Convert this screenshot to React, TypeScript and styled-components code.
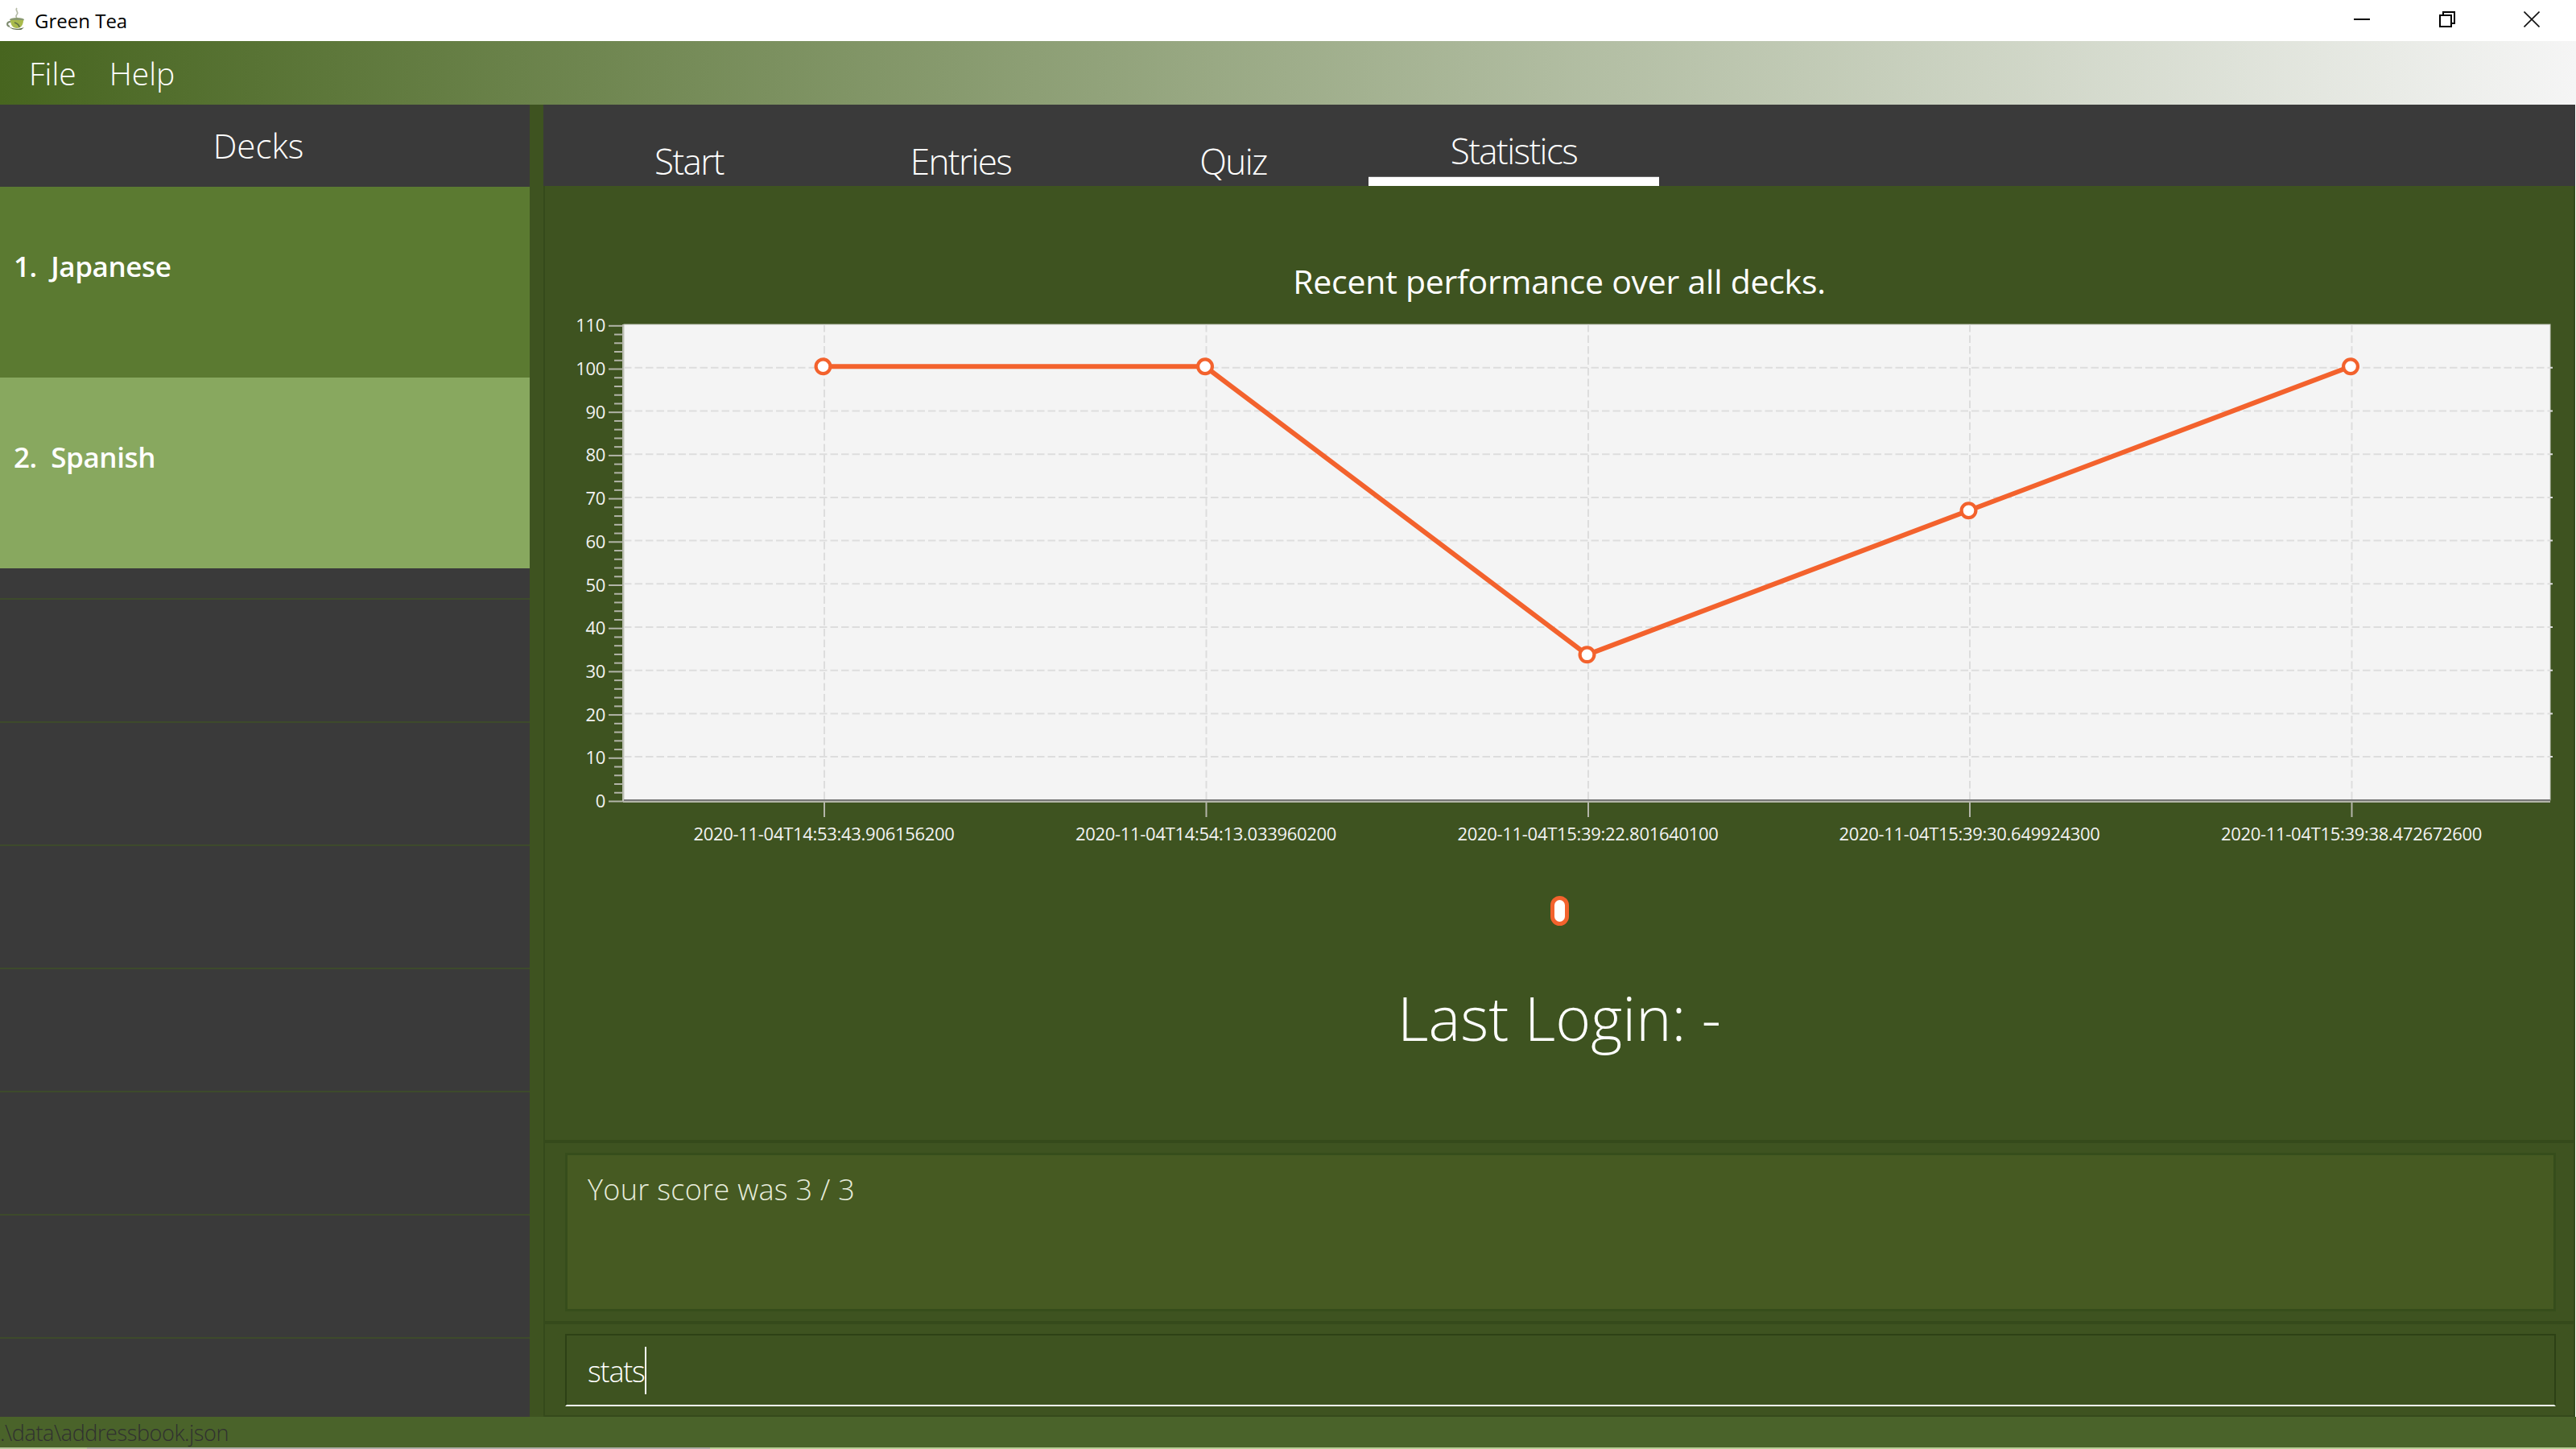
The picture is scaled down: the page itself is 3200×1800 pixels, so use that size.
import styled, { createGlobalStyle } from "styled-components";

const FONT = `"Open Sans", "Noto Sans", "Liberation Sans", sans-serif`;

const GlobalStyle = createGlobalStyle`
  html, body {
    margin: 0;
    padding: 0;
    background: #ffffff;
  }
  * {
    box-sizing: border-box;
  }
`;

// ---- window frame
const Window = styled.div`
  width: 3200px;
  height: 1800px;
  display: flex;
  flex-direction: column;
  overflow: hidden;
  font-family: ${FONT};
`;

const TitleBar = styled.div`
  height: 51px;
  flex: none;
  display: flex;
  align-items: center;
  background: #ffffff;
  padding: 0 2px 3px 8px;
`;

const AppName = styled.span`
  margin: 3px 0 0 11px;
  font-size: 24px;
  letter-spacing: 0;
  line-height: 30px;
  color: #000000;
`;

const WindowControls = styled.div`
  margin-left: auto;
  display: flex;
`;

const WindowButton = styled.div`
  width: 105.5px;
  height: 40px;
  display: flex;
  align-items: center;
  justify-content: center;
`;

const MenuBar = styled.div`
  height: 79px;
  flex: none;
  display: flex;
  align-items: center;
  gap: 41px;
  padding: 0 0 0 36px;
  background: linear-gradient(to right, #47651f, #f5f5f5);
`;

const MenuItem = styled.span`
  font-size: 39px;
  font-weight: 300;
  line-height: 50px;
  color: #ffffff;
`;

const Main = styled.div`
  height: 1630px;
  width: 3199px;
  flex: none;
  display: flex;
  background: #3e5320;
`;

// ---- deck list
const DeckPanel = styled.div`
  width: 658px;
  flex: none;
  display: flex;
  flex-direction: column;
  background: #3a3a3a;
`;

const DeckHeader = styled.div`
  height: 102px;
  flex: none;
  display: flex;
  align-items: center;
  justify-content: center;
  padding: 0 16px 2px 0;
  font-size: 42px;
  font-weight: 300;
  color: #ffffff;
`;

const DeckRow = styled.div<{ $selected?: boolean }>`
  height: 237px;
  flex: none;
  padding: 74px 0 0 17px;
  background: ${(p) => (p.$selected ? "#88a85f" : "#5b7a31")};
  font-size: 35px;
  font-weight: 600;
  line-height: 50px;
  letter-spacing: -0.4px;
  white-space: pre;
  color: #ffffff;
`;

const EmptyRow = styled.div<{ $height: number }>`
  height: ${(p) => p.$height}px;
  flex: none;
  border-bottom: 2px solid #3d4a2b;
`;

const Divider = styled.div`
  width: 17px;
  flex: none;
  background: #3e5320;
`;

// ---- right side
const RightPanel = styled.div`
  flex: 1;
  min-width: 0;
  display: flex;
  flex-direction: column;
`;

const TabBar = styled.div`
  height: 101px;
  flex: none;
  display: flex;
  align-items: flex-end;
  padding-left: 35px;
  background: #3a3a3a;
`;

const Tab = styled.div<{ $width: number; $gap: number; $active?: boolean }>`
  width: ${(p) => p.$width}px;
  margin-left: ${(p) => p.$gap}px;
  height: ${(p) => (p.$active ? 101 : 72)}px;
  flex: none;
  display: flex;
  justify-content: center;
  align-items: flex-end;
  padding-bottom: ${(p) => (p.$active ? 3 : 1)}px;
  font-size: 44px;
  font-weight: 300;
  line-height: 60px;
  letter-spacing: -1.6px;
  color: #ffffff;
  ${(p) => p.$active && "border-bottom: 11px solid #ffffff; box-shadow: inset 0 -1px 0 #666666;"}
`;

const StatsPane = styled.div`
  height: 1189px;
  flex: none;
  display: flex;
  flex-direction: column;
  align-items: center;
  border-left: 2px solid #354a1b;
  border-right: 2px solid #354a1b;
  border-bottom: 4px solid #354a1b;
  background: #3e5320;
`;

const ChartTitle = styled.div`
  margin-top: 88px;
  font-size: 41px;
  line-height: 60px;
  font-weight: 400;
  letter-spacing: -0.25px;
  color: #ffffff;
`;

const ChartSvg = styled.svg`
  display: block;
  margin-top: 2px;
  width: 2520px;
  height: 679px;
  flex: none;
`;

const AxisLabel = styled.text`
  font-family: ${FONT};
  font-size: 22px;
  letter-spacing: -0.3px;
  fill: #f2f2f2;
`;

const LegendPill = styled.div`
  margin-top: 53px;
  width: 23px;
  height: 37px;
  flex: none;
  border: 5px solid #f3622d;
  border-radius: 12px;
  background: #ffffff;
`;

const LastLogin = styled.div`
  margin-top: 64px;
  font-size: 75px;
  font-weight: 300;
  line-height: 100px;
  color: #ffffff;
`;

const ResultSection = styled.div`
  height: 225px;
  flex: none;
  padding: 12px 22px 12px 25px;
  border-left: 2px solid #354a1b;
  border-right: 2px solid #354a1b;
  border-bottom: 4px solid #354a1b;
  background: #3e5320;
`;

const ResultBox = styled.div`
  height: 197px;
  padding: 18px 25px;
  border: 3px solid #364d1b;
  background: #465a22;
  font-size: 36px;
  font-weight: 300;
  line-height: 50px;
  letter-spacing: 0.3px;
  color: #e6ecdc;
`;

const CommandSection = styled.div`
  height: 115px;
  flex: none;
  padding: 12px 22px 0 25px;
  border-left: 2px solid #354a1b;
  border-right: 2px solid #354a1b;
  border-bottom: 2px solid #354a1b;
  background: #3e5320;
`;

const CommandBox = styled.div`
  height: 90px;
  display: flex;
  align-items: flex-start;
  padding: 14px 0 0 26px;
  border: 2px solid #2d4115;
  border-bottom: 2px solid #ffffff;
  background: #3e5320;
  color: #ffffff;
`;

const CommandText = styled.span`
  padding-top: 1px;
  font-size: 36px;
  font-weight: 300;
  line-height: 60px;
  letter-spacing: -1.2px;
`;

const Caret = styled.span`
  width: 2px;
  height: 59px;
  flex: none;
  background: #ffffff;
`;

const StatusBar = styled.div`
  height: 38px;
  flex: none;
  display: flex;
  align-items: center;
  background: #4a632a;
  font-size: 27px;
  font-weight: 300;
  letter-spacing: -0.4px;
  color: #303030;
`;

const BottomEdge = styled.div`
  height: 2px;
  flex: none;
  background: linear-gradient(
    to right,
    #b7c89c 0,
    #b7c89c 108px,
    #aeaea6 108px,
    #aeaea6 882px,
    #b7cf96 882px
  );
`;

// ---- chart data, in page pixels
const PLOT = { left: 775, right: 3168, top: 403, bottom: 994 };
const seriesY = (v: number) => 992.3 - v * 5.37;
const gridY = (v: number) => 993.8 - v * 5.37;
const tickY = (v: number) => 995.5 - v * 5.37;

const points = [
  { x: 1022.5, value: 100, label: "2020-11-04T14:53:43.906156200" },
  { x: 1497, value: 100, label: "2020-11-04T14:54:13.033960200" },
  { x: 1971.5, value: 33.33, label: "2020-11-04T15:39:22.801640100" },
  { x: 2445.5, value: 66.67, label: "2020-11-04T15:39:30.649924300" },
  { x: 2920, value: 100, label: "2020-11-04T15:39:38.472672600" },
];

const majorTicks = Array.from({ length: 12 }, (_, i) => i * 10);
const minorTicks = Array.from({ length: 55 }, (_, i) => i * 2).filter((v) => v % 10 !== 0);

function PerformanceChart() {
  return (
    <ChartSvg viewBox="677 381 2520 679">
      <rect
        x={PLOT.left}
        y={PLOT.top}
        width={PLOT.right - PLOT.left}
        height={PLOT.bottom - PLOT.top}
        fill="#f4f4f4"
        stroke="#c4c8bc"
        strokeWidth="1"
      />
      {majorTicks.slice(1, 11).map((v) => (
        <line
          key={v}
          x1={PLOT.left}
          x2={PLOT.right + 3}
          y1={gridY(v)}
          y2={gridY(v)}
          stroke="#dddddd"
          strokeWidth="2"
          strokeDasharray="9.5 4"
        />
      ))}
      {points.map((p) => (
        <line
          key={p.x}
          x1={p.x + 1.5}
          x2={p.x + 1.5}
          y1={PLOT.top}
          y2={PLOT.bottom}
          stroke="#dddddd"
          strokeWidth="2"
          strokeDasharray="9.5 4"
        />
      ))}

      <line x1="774" x2="774" y1={PLOT.top} y2="996" stroke="#bcbfb4" strokeWidth="2" />
      {minorTicks.map((v) => (
        <line key={v} x1="763" x2="774" y1={tickY(v)} y2={tickY(v)} stroke="#b3b5a9" strokeWidth="2" />
      ))}
      {majorTicks.map((v) => (
        <g key={v}>
          <line x1="756" x2="774" y1={tickY(v)} y2={tickY(v)} stroke="#b3b5a9" strokeWidth="2" />
          <AxisLabel x="752" y={tickY(v) + 7.5} textAnchor="end">
            {v}
          </AxisLabel>
        </g>
      ))}

      <rect x={PLOT.left} y="993" width={PLOT.right - PLOT.left} height="2" fill="#767676" />
      <rect x={PLOT.left - 1} y="995" width={PLOT.right - PLOT.left + 1} height="2" fill="#b3b5a9" />
      {points.map((p) => (
        <g key={p.label}>
          <line x1={p.x + 1.5} x2={p.x + 1.5} y1="997" y2="1015" stroke="#b3b5a9" strokeWidth="2" />
          <AxisLabel x={p.x + 1} y="1044" textAnchor="middle">
            {p.label}
          </AxisLabel>
        </g>
      ))}

      <polyline
        points={points.map((p) => `${p.x},${seriesY(p.value)}`).join(" ")}
        fill="none"
        stroke="#f3622d"
        strokeWidth="6"
      />
      {points.map((p) => (
        <circle
          key={p.x}
          cx={p.x}
          cy={seriesY(p.value)}
          r="8.9"
          fill="#ffffff"
          stroke="#f3622d"
          strokeWidth="4.2"
        />
      ))}
    </ChartSvg>
  );
}

function TeaIcon() {
  return (
    <svg width="24" height="30" viewBox="0 0 24 30">
      <path d="M13 1c-3 3 3 5 0 8s1 4 0 6" fill="none" stroke="#b4bba6" strokeWidth="1.6" />
      <ellipse cx="13" cy="15.5" rx="9" ry="2.4" fill="#8a9a70" />
      <path d="M5 16h16c0 6-3 10-8 10s-8-4-8-10z" fill="#a9ba4c" />
      <path d="M5 18c-5 0-5 5-1 6" fill="none" stroke="#7d8a6d" strokeWidth="2" />
      <path d="M3 24c5 3 11 4 19 1-4 3-2 3-7 3-6 0-9-1-12-4z" fill="#5a6a4a" />
      <path d="M10 19c3 1 6 3 6 6" fill="none" stroke="#5e6e45" strokeWidth="1.4" />
    </svg>
  );
}

export default function App() {
  return (
    <Window>
      <GlobalStyle />
      <TitleBar>
        <TeaIcon />
        <AppName>Green Tea</AppName>
        <WindowControls>
          <WindowButton>
            <svg width="20" height="20" viewBox="0 0 20 20">
              <rect x="0" y="9" width="20" height="2" fill="#000000" />
            </svg>
          </WindowButton>
          <WindowButton>
            <svg width="20" height="20" viewBox="0 0 20 20" fill="none" stroke="#000000" strokeWidth="2">
              <rect x="1" y="5" width="14" height="14" />
              <path d="M5 5V1h14v14h-4" />
            </svg>
          </WindowButton>
          <WindowButton>
            <svg width="20" height="20" viewBox="0 0 20 20" fill="none" stroke="#111111" strokeWidth="1.6">
              <path d="M0.5 0.5L19.5 19.5M19.5 0.5L0.5 19.5" />
            </svg>
          </WindowButton>
        </WindowControls>
      </TitleBar>

      <MenuBar>
        <MenuItem>File</MenuItem>
        <MenuItem>Help</MenuItem>
      </MenuBar>

      <Main>
        <DeckPanel>
          <DeckHeader>Decks</DeckHeader>
          <DeckRow>1.  Japanese</DeckRow>
          <DeckRow $selected>2.  Spanish</DeckRow>
          <EmptyRow $height={39} />
          <EmptyRow $height={153} />
          <EmptyRow $height={153} />
          <EmptyRow $height={153} />
          <EmptyRow $height={153} />
          <EmptyRow $height={153} />
          <EmptyRow $height={153} />
        </DeckPanel>
        <Divider />

        <RightPanel>
          <TabBar>
            <Tab $width={292} $gap={0}>Start</Tab>
            <Tab $width={329} $gap={27}>Entries</Tab>
            <Tab $width={294} $gap={27}>Quiz</Tab>
            <Tab $width={361} $gap={21} $active>Statistics</Tab>
          </TabBar>

          <StatsPane>
            <ChartTitle>Recent performance over all decks.</ChartTitle>
            <PerformanceChart />
            <LegendPill />
            <LastLogin>Last Login: -</LastLogin>
          </StatsPane>

          <ResultSection>
            <ResultBox>Your score was 3 / 3</ResultBox>
          </ResultSection>

          <CommandSection>
            <CommandBox>
              <CommandText>stats</CommandText>
              <Caret />
            </CommandBox>
          </CommandSection>
        </RightPanel>
      </Main>

      <StatusBar>.\data\addressbook.json</StatusBar>
      <BottomEdge />
    </Window>
  );
}
